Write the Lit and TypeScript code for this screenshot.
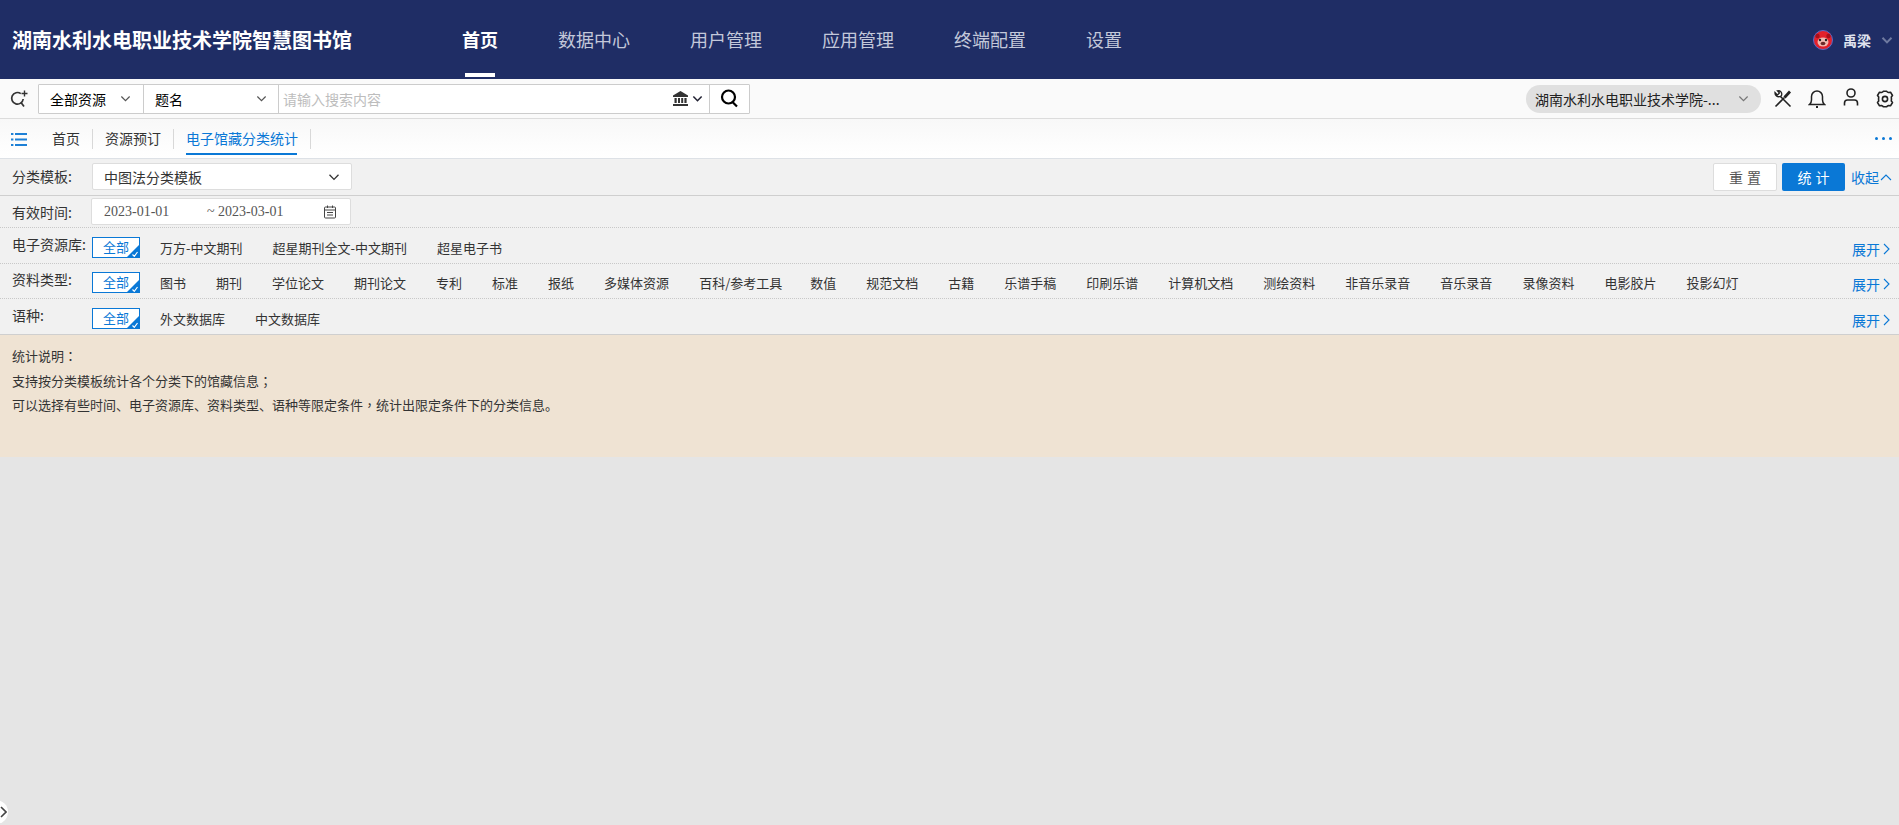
import { LitElement, html, css } from "lit";
import { customElement } from "lit/decorators.js";

const chev = (w = 11, c = "#555", sw = 1.3) => html`<svg width=${w} height=${w} viewBox="0 0 12 12" fill="none" stroke=${c} stroke-width=${sw}><path d="M1.500 3.800 6 8.400l4.500-4.600"/></svg>`;

const RESOURCES = ["万方-中文期刊", "超星期刊全文-中文期刊", "超星电子书"];
const TYPES = ["图书", "期刊", "学位论文", "期刊论文", "专利", "标准", "报纸", "多媒体资源", "百科/参考工具", "数值", "规范文档", "古籍", "乐谱手稿", "印刷乐谱", "计算机文档", "测绘资料", "非音乐录音", "音乐录音", "录像资料", "电影胶片", "投影幻灯"];
const LANGS = ["外文数据库", "中文数据库"];

@customElement("app-root")
export class AppRoot extends LitElement {
  static styles = css`
    :host { display: block; position: relative; height: 825px; overflow: hidden; background: #e5e5e5; font-family: "Noto Sans CJK SC", "Noto Sans", sans-serif; font-size: 13px; color: #333; }
    svg { display: block; flex: none; }
    .header { height: 79px; background: #1f2d65; display: flex; align-items: center; color: #fff; }
    .title { padding-left: 12px; width: 340px; font-size: 20px; font-weight: 700; line-height: 28px; white-space: nowrap; }
    .nav { display: flex; margin-left: 80px; height: 79px; }
    .nav-item { position: relative; padding: 0 30px; font-size: 18px; line-height: 79px; color: #c3c8da; white-space: nowrap; }
    .nav-item.on { color: #fff; font-weight: 700; }
    .nav-item.on::after { content: ""; position: absolute; left: 33px; right: 33px; top: 73px; height: 4px; background: #fff; }
    .user { margin-left: auto; display: flex; align-items: center; padding-right: 6px; }
    .user span { margin: 0 10px; font-size: 14px; font-weight: 700; color: #dfe2ee; line-height: 20px; }

    .toolbar { height: 39px; background: #fafafa; border-bottom: 1px solid #dcdcdc; display: flex; align-items: center; padding-left: 10px; padding-right: 5px; }
    .searchbox { margin-left: 10px; width: 712px; height: 30px; box-sizing: border-box; border: 1px solid #ccc; background: #fff; display: flex; align-items: stretch; font-size: 14px; line-height: 18px; color: #000; border-radius: 1px; }
    .sel { display: flex; align-items: center; justify-content: space-between; border-right: 1px solid #ccc; white-space: nowrap; box-sizing: border-box; }
    .sel.a { width: 105px; padding: 0 12px 0 11px; }
    .sel.b { width: 135px; padding: 0 11px 0 11px; }
    .ph { flex: 1; display: flex; align-items: center; padding-left: 4px; color: #bdbdbd; }
    .bank { margin-left: auto; display: flex; align-items: center; gap: 3px; padding-right: 6px; }
    .go { width: 39px; border-left: 1px solid #ccc; display: flex; align-items: center; justify-content: center; }
    .pill { margin-left: auto; width: 235px; height: 28px; box-sizing: border-box; border-radius: 14px; background: #e0e0e0; display: flex; align-items: center; justify-content: space-between; padding: 0 12px 0 9px; font-size: 14px; line-height: 18px; color: #222; white-space: nowrap; }
    .tools { display: flex; align-items: center; gap: 16px; margin-left: 13px; }
    .tools .person { margin-top: -3px; }

    .tabs { height: 39px; border-bottom: 1px solid #dde1e6; background: linear-gradient(#f8f8f8, #fff); display: flex; align-items: center; padding-left: 11px; font-size: 14px; }
    .menu { margin-top: 1px; }
    .tabs-list { display: flex; margin-left: 13px; align-items: center; height: 100%; }
    .tab { position: relative; padding: 0 12px 0 12px; height: 20px; line-height: 18px; border-right: 1px solid #d8d8d8; white-space: nowrap; color: #333; }
    .tab.on { color: #0a78d6; }
    .tab.on::after { content: ""; position: absolute; left: 12px; right: 13px; top: 24px; height: 2px; background: #0a78d6; }
    .more { margin-left: auto; display: flex; gap: 4px; padding-right: 7px; }
    .more i { width: 3px; height: 3px; border-radius: 50%; background: #0a78d6; display: block; }

    .filter { background: #f1f1f1; }
    .row { display: flex; align-items: flex-start; padding: 0 7px 0 12px; border-bottom: 1px dotted #c8c8c8; }
    .row.solid { border-bottom: 1px solid #cfcfcf; }
    .r1 { height: 36px; }
    .r2 { height: 31px; }
    .r3 { height: 35px; }
    .r4 { height: 34px; }
    .label { width: 80px; flex: none; font-size: 14px; line-height: 20px; margin-top: 6px; white-space: nowrap; color: #333; }
    .r1 .label { margin-top: 7px; }
    .r2 .label { margin-top: 6px; }
    .r4 .label { margin-top: 5px; }
    .dd { width: 260px; height: 27px; margin-top: 4px; box-sizing: border-box; border: 1px solid #ddd; background: #fff; border-radius: 2px; display: flex; align-items: center; justify-content: space-between; padding: 0 11px; font-size: 14px; line-height: 18px; color: #333; }
    .date { margin-top: 2px; margin-left: -1px; font-family: "Liberation Serif", serif; color: #555; padding: 0 13px 0 12px; }
    .date .from { width: 103px; }
    .date .to { flex: 1; }
    .actions { margin-left: auto; margin-top: 4px; display: flex; align-items: center; }
    .btn { height: 28px; box-sizing: border-box; border-radius: 2px; display: flex; align-items: center; justify-content: center; letter-spacing: 4px; padding-left: 4px; font-size: 14px; line-height: 18px; }
    .btn.plain { width: 64px; background: #fff; border: 1px solid #ddd; color: #555; margin-right: 5px; }
    .btn.blue { width: 63px; background: #0a78d6; color: #fff; margin-right: 6px; }
    .link { display: flex; align-items: center; gap: 1px; color: #0a78d6; font-size: 14px; line-height: 20px; white-space: nowrap; }
    .opts { display: flex; align-items: center; gap: 30px; margin-top: 9px; height: 21px; flex: 1; white-space: nowrap; }
    .r4 .opts { margin-top: 8px; }
    .chip { position: relative; width: 48px; height: 21px; box-sizing: border-box; border: 1px solid #0a78d6; background: #fff; color: #0a78d6; line-height: 18px; text-align: center; margin-right: -10px; overflow: hidden; }
    .chip svg { position: absolute; right: -1px; bottom: -1px; }
    .opt { color: #333; line-height: 20px; }
    .opt.slash { margin-right: -2px; }
    .r3 .link, .r4 .link { margin-top: 11px; margin-left: auto; margin-right: 2px; flex: none; gap: 3px; }
    .r4 .link { margin-top: 10px; }

    .notice { height: 122px; box-sizing: border-box; background: #efe3d3; padding: 9px 12px 0; line-height: 24.5px; color: #333; }
    .notice p { margin: 0; }
    .pn { font-family: "Noto Sans CJK TC", sans-serif; }
    .handle { position: absolute; left: -16px; top: 800px; width: 24px; height: 24px; border-radius: 50%; background: #fff; display: flex; align-items: center; justify-content: flex-end; }
    .handle svg { margin-right: 1px; }
  `;

  private row(label: string, items: string[], cls = "") {
    return html`<div class="row ${cls}">
      <div class="label">${label}</div>
      <div class="opts">
        <div class="chip">全部<svg width="14" height="14" viewBox="0 0 14 14"><path d="M14 0V14H0Z" fill="#0a78d6"/><path d="M6.500 10.500l1.800 1.800 3.200-4.300" fill="none" stroke="#fff" stroke-width="1.200"/></svg></div>
        ${items.map((i) => html`<div class="opt ${i.includes("/") ? "slash" : ""}">${i}</div>`)}
      </div>
      <div class="link">展开<svg width="7" height="12" viewBox="0 0 7 12" fill="none" stroke="#0a78d6" stroke-width="1.100"><path d="M1 1l5 5-5 5"/></svg></div>
    </div>`;
  }

  render() {
    return html`
      <div class="header">
        <div class="title">湖南水利水电职业技术学院智慧图书馆</div>
        <div class="nav">
          ${["首页", "数据中心", "用户管理", "应用管理", "终端配置", "设置"].map((n, i) => html`<div class="nav-item ${i === 0 ? "on" : ""}">${n}</div>`)}
        </div>
        <div class="user">
          <svg width="20" height="20" viewBox="0 0 20 20">
            <circle cx="10" cy="10" r="9.500" fill="#e3212b" stroke="#5a6ac8" stroke-width="1"/>
            <circle cx="4.500" cy="6" r="2.200" fill="#a8101a"/><circle cx="15.500" cy="6" r="2.200" fill="#a8101a"/>
            <ellipse cx="10" cy="12" rx="5.500" ry="4.500" fill="#f0b8b0"/>
            <circle cx="7" cy="10" r="1.200" fill="#222"/><circle cx="13" cy="10" r="1.200" fill="#222"/>
            <ellipse cx="10" cy="13.500" rx="2.400" ry="1.800" fill="#6d2a2a"/>
          </svg>
          <span>禹梁</span>
          ${chev(12, "#6f7aa0", 2)}
        </div>
      </div>
      <div class="toolbar">
        <svg width="18" height="18" viewBox="0 0 18 18" fill="none" stroke="#333" stroke-width="1.700">
          <path d="M10.800 3.600A5.800 5.800 0 1 0 13.200 9"/><path d="M11 12.600l3 4"/><path d="M14.500 .5v6M11.500 3.500h6" stroke-width="1.400"/>
        </svg>
        <div class="searchbox">
          <div class="sel a">全部资源${chev()}</div>
          <div class="sel b">题名${chev()}</div>
          <div class="ph">请输入搜索内容
            <div class="bank">
              <svg width="17" height="17" viewBox="0 0 17 17" fill="#333"><path d="M8.500 1 16 5.500V7H1V5.500Z"/><rect x="2.500" y="8" width="2.200" height="5"/><rect x="6" y="8" width="2" height="5"/><rect x="9.200" y="8" width="2" height="5"/><rect x="12.400" y="8" width="2.200" height="5"/><rect x="1" y="14" width="15" height="2"/></svg>
              ${chev(11, "#223", 1.700)}
            </div>
          </div>
          <div class="go">
            <svg width="19" height="19" viewBox="0 0 19 19" fill="none" stroke="#000" stroke-width="2.200"><circle cx="8.500" cy="8" r="6.500"/><path d="M12.500 13l4.500 4.500"/></svg>
          </div>
        </div>
        <div class="pill"><span>湖南水利水电职业技术学院-...</span>${chev(11, "#777")}</div>
        <div class="tools">
          <svg width="18" height="18" viewBox="0 0 18 18" fill="none" stroke="#222" stroke-width="1.600"><path d="M16.500 16.500 6.500 6.500"/><path d="M1 2.500c-.3 3 2.200 5 5.500 4l1-1C8.500 2.500 6.500.5 3.500.8l2 2.200L3.300 5Z" stroke-width="1.300"/><path d="M1.500 16.500 10.500 7.500"/><path d="M10.500 7.500l5.500-6" stroke-width="2.800"/></svg>
          <svg width="18" height="18" viewBox="0 0 18 18" fill="none" stroke="#222" stroke-width="1.500"><path d="M1.500 14.500c1.400-1.200 2-2.500 2-4.500V6.500a5.500 5.500 0 0 1 11 0V10c0 2 .6 3.300 2 4.500Z"/><path d="M8 17h2" stroke-width="2"/></svg>
          <svg class="person" width="18" height="18" viewBox="0 0 18 18" fill="none" stroke="#222" stroke-width="1.600"><circle cx="9" cy="5" r="4"/><path d="M2.500 17.500V15c0-1.700 1.300-3 3-3h7c1.700 0 3 1.300 3 3v2.500"/></svg>
          <svg width="18" height="18" viewBox="0 0 18 18" fill="none" stroke="#222" stroke-width="1.600" stroke-linejoin="round"><path d="M5.500 2.500Q7 2 7.300 1.200H10.700Q11 2 12.500 2.500L14.500 2.200 16.500 5.500 15.300 7Q15.600 9 15.300 11L16.500 12.500 14.500 15.800 12.500 15.500Q11 16 10.700 16.800H7.300Q7 16 5.500 15.500L3.500 15.800 1.500 12.500 2.700 11Q2.400 9 2.700 7L1.500 5.500 3.500 2.200Z"/><circle cx="9" cy="9" r="2.600"/></svg>
        </div>
      </div>
      <div class="tabs">
        <svg class="menu" width="16" height="13" viewBox="0 0 16 13" fill="#1d80d6"><rect x="0" y="0" width="2.400" height="2"/><rect x="4" y="0" width="12" height="2"/><rect x="0" y="5.500" width="2.400" height="2"/><rect x="4" y="5.500" width="12" height="2"/><rect x="0" y="11" width="2.400" height="2"/><rect x="4" y="11" width="12" height="2"/></svg>
        <div class="tabs-list">
          <div class="tab">首页</div>
          <div class="tab">资源预订</div>
          <div class="tab on">电子馆藏分类统计</div>
        </div>
        <div class="more"><i></i><i></i><i></i></div>
      </div>
      <div class="filter">
        <div class="row r1 solid">
          <div class="label">分类模板:</div>
          <div class="dd">中图法分类模板${chev(12, "#333")}</div>
          <div class="actions">
            <div class="btn plain">重置</div>
            <div class="btn blue">统计</div>
            <div class="link">收起<svg width="12" height="7" viewBox="0 0 12 7" fill="none" stroke="#0a78d6" stroke-width="1.100"><path d="M1 6l5-5 5 5"/></svg></div>
          </div>
        </div>
        <div class="row r2">
          <div class="label">有效时间:</div>
          <div class="dd date">
            <span class="from">2023-01-01</span><span class="to">~ 2023-03-01</span>
            <svg width="14" height="14" viewBox="0 0 14 14" fill="none" stroke="#444" stroke-width="1"><rect x="1.500" y="2" width="11" height="11" rx="1"/><path d="M1.500 5h11M4.500 .5V3M9.500 .5V3M4 7.500h6M4 10h6"/></svg>
          </div>
        </div>
        ${this.row("电子资源库:", RESOURCES, "r3")}
        ${this.row("资料类型:", TYPES, "r4")}
        ${this.row("语种:", LANGS, "r3 solid")}
      </div>
      <div class="notice">
        <p>统计说明<span class="pn">：</span></p>
        <p>支持按分类模板统计各个分类下的馆藏信息<span class="pn">；</span></p>
        <p>可以选择有些时间、电子资源库、资料类型、语种等限定条件<span class="pn">，</span>统计出限定条件下的分类信息。</p>
      </div>
      <div class="handle"><svg width="7" height="12" viewBox="0 0 7 12" fill="none" stroke="#444" stroke-width="1.600"><path d="M1 1l5 5-5 5"/></svg></div>
    `;
  }
}
